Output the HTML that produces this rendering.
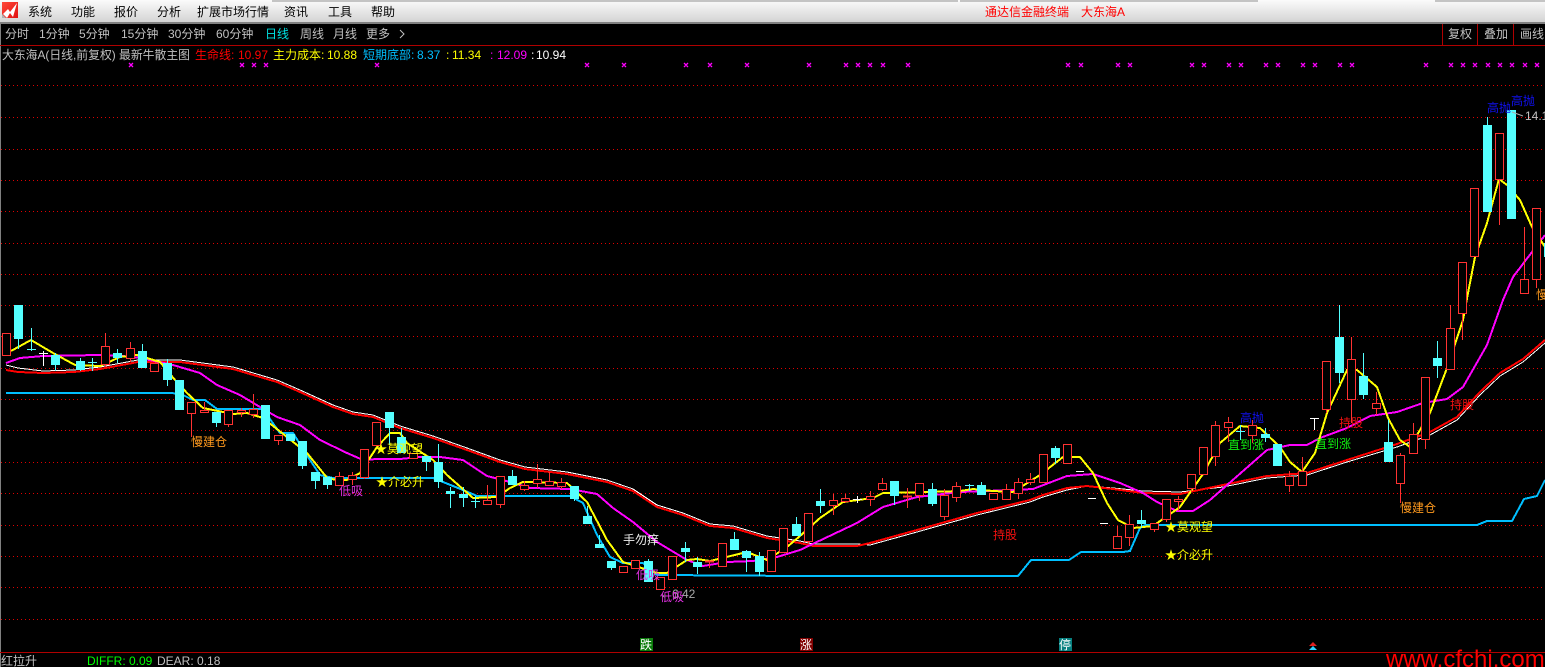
<!DOCTYPE html>
<html><head><meta charset="utf-8"><style>
html,body{margin:0;padding:0;background:#000;overflow:hidden;width:1545px;height:667px}
svg{display:block}
text{font:12px "Liberation Sans","WenQuanYi Zen Hei","Noto Sans CJK SC",sans-serif;white-space:pre}
.g{fill:#c0c0c0}
.l{fill:none;stroke-width:2;shape-rendering:crispEdges}
</style></head><body>
<svg width="1545" height="667" viewBox="0 0 1545 667" xmlns="http://www.w3.org/2000/svg">
<defs><linearGradient id="b" x1="0" y1="0" x2="0" y2="1"><stop offset="0" stop-color="#fbfbfb"/><stop offset="1" stop-color="#d2d2d2"/></linearGradient>
<linearGradient id="r" x1="0" y1="0" x2="1" y2="1"><stop offset="0" stop-color="#ff4a3a"/><stop offset="1" stop-color="#e01010"/></linearGradient></defs>
<rect width="1545" height="667" fill="#000"/>
<rect width="1545" height="23" fill="url(#b)"/>
<rect y="22" width="1545" height="2" fill="#808080"/>
<path d="M272 0h686v2H272zM960 0h298v2H960zM1435 0h110v2h-110z" fill="#c4c4c4"/>
<rect x="2" y="2" width="16" height="16" fill="url(#r)"/>
<path d="M2 18v-4l4 4z" fill="#b0b0b0"/>
<path d="M3 14l5-5 2 3 7-9-4 14-3-4-3 5z" fill="#fff"/>
<g fill="#000"><text x="28" y="16">系统</text><text x="71" y="16">功能</text><text x="114" y="16">报价</text><text x="157" y="16">分析</text><text x="197" y="16">扩展市场行情</text><text x="284" y="16">资讯</text><text x="328" y="16">工具</text><text x="371" y="16">帮助</text></g>
<g fill="#f00"><text x="985" y="16">通达信金融终端</text><text x="1081" y="16">大东海A</text></g>

<rect x="0" y="24" width="1" height="643" fill="#808080"/>
<g class="g"><text x="5" y="38">分时</text><text x="39" y="38">1分钟</text><text x="79" y="38">5分钟</text><text x="121" y="38">15分钟</text><text x="168" y="38">30分钟</text><text x="216" y="38">60分钟</text><text x="300" y="38">周线</text><text x="333" y="38">月线</text><text x="366" y="38">更多</text><text x="1448" y="38">复权</text><text x="1484" y="38">叠加</text><text x="1520" y="38">画线</text></g>
<text x="265" y="38" fill="#00e0e0">日线</text>
<path d="M400 30l4 4-4 4" fill="none" stroke="#c0c0c0"/>
<path d="M0 45.5H1545M1442.5 24V45M1477.5 24V45M1513.5 24V45" stroke="#b00000" fill="none" shape-rendering="crispEdges"/>
<path d="M0 652.5H1545" stroke="#b00000" shape-rendering="crispEdges"/>

<text x="2" y="59" class="g" textLength="188" lengthAdjust="spacingAndGlyphs">大东海A(日线,前复权) 最新牛散主图</text>
<text x="195" y="59" fill="#f00">生命线:</text><text x="238" y="59" fill="#f00">10.97</text>
<text x="273" y="59" fill="#ff0">主力成本:</text><text x="327" y="59" fill="#ff0">10.88</text>
<text x="363" y="59" fill="#00bfff">短期底部:</text><text x="417" y="59" fill="#00bfff">8.37</text>
<text x="446" y="59" fill="#ff0">:</text><text x="452" y="59" fill="#ff0">11.34</text>
<text x="490" y="59" fill="#f0f">:</text><text x="497" y="59" fill="#f0f">12.09</text>
<text x="531" y="59" fill="#fff">:</text><text x="536" y="59" fill="#fff">10.94</text>

<path fill="none" stroke="#f0f" stroke-width="1.3" d="M129 63l4 4m0-4l-4 4M240 63l4 4m0-4l-4 4M252 63l4 4m0-4l-4 4M264 63l4 4m0-4l-4 4M375 63l4 4m0-4l-4 4M585 63l4 4m0-4l-4 4M622 63l4 4m0-4l-4 4M684 63l4 4m0-4l-4 4M708 63l4 4m0-4l-4 4M745 63l4 4m0-4l-4 4M807 63l4 4m0-4l-4 4M844 63l4 4m0-4l-4 4M856 63l4 4m0-4l-4 4M868 63l4 4m0-4l-4 4M881 63l4 4m0-4l-4 4M906 63l4 4m0-4l-4 4M1066 63l4 4m0-4l-4 4M1079 63l4 4m0-4l-4 4M1116 63l4 4m0-4l-4 4M1128 63l4 4m0-4l-4 4M1190 63l4 4m0-4l-4 4M1202 63l4 4m0-4l-4 4M1227 63l4 4m0-4l-4 4M1239 63l4 4m0-4l-4 4M1264 63l4 4m0-4l-4 4M1276 63l4 4m0-4l-4 4M1301 63l4 4m0-4l-4 4M1313 63l4 4m0-4l-4 4M1338 63l4 4m0-4l-4 4M1350 63l4 4m0-4l-4 4M1424 63l4 4m0-4l-4 4M1449 63l4 4m0-4l-4 4M1461 63l4 4m0-4l-4 4M1473 63l4 4m0-4l-4 4M1486 63l4 4m0-4l-4 4M1498 63l4 4m0-4l-4 4M1510 63l4 4m0-4l-4 4M1523 63l4 4m0-4l-4 4M1535 63l4 4m0-4l-4 4"/>

<path stroke="#e00000" stroke-dasharray="1 3" fill="none" shape-rendering="crispEdges" d="M1 85.5H1545M1 117.5H1545M1 149.5H1545M1 180.5H1545M1 211.5H1545M1 243.5H1545M1 274.5H1545M1 305.5H1545M1 336.5H1545M1 368.5H1545M1 399.5H1545M1 430.5H1545M1 462.5H1545M1 493.5H1545M1 525.5H1545M1 556.5H1545M1 587.5H1545M1 619.5H1545"/>

<polyline class="l" stroke="#00bfff" points="6,393 172,393 183,395 193,400 205,400 217,409 263,409 272,422 280,433 293,433 308,457 320,475 333,478 433,478 443,482 463,490 477,496 570,496 583,503 597,535 610,557 623,563 643,563 657,575 800,576 1018,576 1031,560 1069,560 1081,552 1123,552 1130,551 1140,528 1145,525 1477,525 1487,521 1512,521 1524,499 1537,496 1545,480"/>
<polyline class="l" stroke="#fff" style="stroke-width:1" points="6,365 18,368 43,371 74,370 100,367 138,360 180,360 233,367 277,380 300,390 333,405 353,412 373,415 400,426 433,436 467,448 500,460 525,467 567,472 607,480 633,489 657,505 683,513 710,524 733,526 767,536 800,541 813,544 857,544 870,545 917,532 977,515 1030,502 1043,497 1067,490 1087,486 1113,488 1143,491 1180,492 1223,487 1267,478 1307,475 1347,462 1397,447 1430,435 1457,420 1480,395 1500,376 1523,362 1545,343"/>
<polyline class="l" stroke="#f00" points="6,370 18,372 43,373 74,372 100,369 138,362 180,362 233,369 277,382 300,392 333,407 353,414 373,417 400,428 433,438 467,450 500,462 525,469 567,474 607,482 633,491 657,507 683,515 710,526 733,528 767,538 800,543 813,546 857,546 870,543 917,530 977,513 1030,500 1043,495 1067,488 1087,486 1113,489 1143,493 1180,494 1223,485 1267,476 1307,473 1347,460 1397,444 1430,432 1457,417 1480,392 1500,373 1523,359 1545,340"/>
<polyline class="l" stroke="#f0f" points="6,363 20,358 43,356 100,355 123,356 140,358 173,365 200,373 217,385 240,395 260,407 277,417 300,425 320,440 347,453 363,460 377,459 400,459 420,457 440,457 463,460 487,476 510,482 530,488 570,489 597,494 613,508 633,522 657,542 687,560 703,566 727,562 753,561 777,557 800,550 857,523 883,507 917,497 960,492 1013,490 1033,489 1067,476 1093,474 1120,483 1143,493 1157,502 1177,511 1193,511 1210,500 1267,450 1290,445 1307,445 1320,438 1347,428 1370,416 1397,412 1423,403 1447,399 1463,387 1487,345 1503,300 1513,277 1532,252 1545,235"/>
<polyline class="l" stroke="#ff0" points="11,351 31,340 53,353 75,365 100,366 120,357 137,355 160,362 175,380 187,393 203,408 233,414 247,413 263,418 287,437 307,453 328,479 347,480 360,473 377,447 390,433 400,433 407,443 433,460 447,475 473,498 497,497 510,488 523,482 567,483 587,502 607,540 623,562 657,573 667,573 687,560 697,559 710,561 747,552 767,560 787,547 800,536 820,518 843,502 873,498 883,493 927,492 960,491 973,489 993,491 1013,492 1040,475 1063,457 1080,457 1093,473 1107,503 1118,520 1133,528 1153,526 1173,512 1180,507 1203,474 1220,443 1240,426 1260,428 1280,447 1290,462 1302,472 1315,453 1327,413 1347,370 1357,370 1377,387 1388,418 1400,440 1410,447 1430,413 1447,368 1463,320 1468,293 1475,257 1487,223 1499,179 1507,185 1520,200 1532,227 1545,247"/>

<!-- white ticks -->
<path stroke="#fff" fill="none" shape-rendering="crispEdges" d="M43.5 351V366M39 353.5h9M857.5 496V503M853 499.5h9M1076 471.5h8M1088 498.5h8M1100 523.5h8M1310 418.5h9M1314.5 418V430"/>

<!-- cyan wicks -->
<path stroke="#54ffff" fill="none" shape-rendering="crispEdges" d="M18.5 339V349M31.5 328V351M27 349.5h9M92.5 358V371M88 362.5h9M55.5 353V371M80.5 358V371M117.5 349V363M142.5 344V351M167.5 359V386M216.5 423V427M302.5 466V469M315.5 481V489M327.5 485V489M389.5 428V445M401.5 428V437M426.5 462V471M438.5 444V488M450.5 487V508M463.5 487V507M475.5 496V508M471 501.5h9M512.5 470V476M574.5 499V501M587.5 506V516M599.5 535V544M611.5 568V570M648.5 559V561M685.5 542V562M697.5 557V574M734.5 532V539M746.5 550V572M759.5 552V576M796.5 517V524M820.5 489V513M894.5 496V505M932.5 483V506M969.5 484V491M965 485.5h9M981.5 482V485M1055.5 446V464M1141.5 510V528M1240.5 425V440M1236 431.5h9M1265.5 428V442M1339.5 305V383M1363.5 353V399M1388.5 420V442M1437.5 341V378M1487.5 117V125"/>
<!-- cyan bodies -->
<path fill="#54ffff" shape-rendering="crispEdges" d="M14 305h9v34h-9zM51 355h9v10h-9zM76 361h9v9h-9zM113 353h9v5h-9zM138 351h9v17h-9zM163 363h9v17h-9zM175 380h9v30h-9zM212 412h9v11h-9zM261 405h9v34h-9zM286 434h9v7h-9zM298 441h9v25h-9zM311 472h9v9h-9zM323 477h9v8h-9zM385 412h9v16h-9zM397 437h9v16h-9zM422 456h9v6h-9zM434 462h9v20h-9zM446 491h9v3h-9zM459 494h9v4h-9zM508 476h9v9h-9zM570 486h9v13h-9zM583 516h9v8h-9zM595 544h9v4h-9zM607 561h9v7h-9zM644 561h9v21h-9zM681 548h9v4h-9zM693 562h9v5h-9zM730 539h9v11h-9zM742 551h9v7h-9zM755 556h9v16h-9zM792 524h9v12h-9zM816 501h9v5h-9zM890 481h9v15h-9zM928 489h9v15h-9zM977 485h9v10h-9zM1051 448h9v10h-9zM1137 520h9v4h-9zM1261 434h9v4h-9zM1273 444h9v22h-9zM1335 337h9v36h-9zM1359 376h9v19h-9zM1384 442h9v20h-9zM1433 358h9v8h-9zM1483 125h9v87h-9zM1507 110h9v109h-9zM1544 243h1v14h-1z"/>

<!-- red wicks -->
<path stroke="#ff3232" fill="none" shape-rendering="crispEdges" d="M105.5 333V367M130.5 342V362M191.5 413V437M204.5 402V412M228.5 424V427M241.5 408V417M253.5 394V418M278.5 440V445M339.5 472V476M352.5 472V485M364.5 477V479M413.5 458V459M487.5 485V500M500.5 504V508M524.5 481V491M537.5 464V488M549.5 472V481M561.5 478V489M709.5 560V568M808.5 541V544M833.5 494V515M845.5 494V503M870.5 491V506M882.5 478V491M907.5 488V508M919.5 495V501M944.5 489V520M956.5 482V502M1006.5 484V489M1018.5 478V499M1030.5 473V485M1117.5 526V536M1129.5 515V546M1154.5 529V532M1166.5 519V522M1178.5 496V511M1191.5 488V492M1215.5 421V466M1228.5 417V442M1252.5 420V443M1289.5 471V492M1302.5 457V471M1326.5 409V413M1351.5 337V423M1376.5 392V415M1400.5 453V503M1413.5 423V434M1425.5 439V449M1450.5 305V328M1462.5 313V340M1499.5 179V225M1524.5 227V279M1536.5 279V288"/>
<!-- red bodies -->
<path fill="#000" stroke="#ff3232" shape-rendering="crispEdges" d="M2.5 333.5h8v22h-8zM101.5 346.5h8v18h-8zM126.5 348.5h8v10h-8zM150.5 363.5h8v8h-8zM187.5 402.5h8v11h-8zM200.5 410.5h8v2h-8zM224.5 410.5h8v14h-8zM237.5 410.5h8v2h-8zM249.5 409.5h8v5h-8zM274.5 435.5h8v5h-8zM335.5 476.5h8v9h-8zM348.5 475.5h8v4h-8zM360.5 449.5h8v28h-8zM372.5 422.5h8v23h-8zM409.5 453.5h8v5h-8zM483.5 500.5h8v4h-8zM496.5 476.5h8v28h-8zM520.5 485.5h8v4h-8zM533.5 479.5h8v4h-8zM545.5 481.5h8v4h-8zM557.5 482.5h8v4h-8zM619.5 566.5h8v6h-8zM631.5 560.5h8v8h-8zM656.5 577.5h8v12h-8zM668.5 556.5h8v23h-8zM705.5 561h8v1h-8zM718.5 543.5h8v23h-8zM767.5 550.5h8v21h-8zM779.5 528.5h8v24h-8zM804.5 513.5h8v28h-8zM829.5 500.5h8v5h-8zM841.5 498.5h8v3h-8zM866.5 496.5h8v3h-8zM878.5 483.5h8v6h-8zM903.5 496h8v1h-8zM915.5 483.5h8v12h-8zM940.5 495.5h8v21h-8zM952.5 486.5h8v11h-8zM989.5 493.5h8v6h-8zM1002.5 489.5h8v10h-8zM1014.5 482.5h8v11h-8zM1026.5 479.5h8v3h-8zM1039.5 454.5h8v28h-8zM1063.5 444.5h8v19h-8zM1113.5 536.5h8v12h-8zM1125.5 524.5h8v13h-8zM1150.5 523.5h8v6h-8zM1162.5 499.5h8v20h-8zM1174.5 499.5h8v2h-8zM1187.5 474.5h8v14h-8zM1199.5 447.5h8v27h-8zM1211.5 425.5h8v31h-8zM1224.5 422.5h8v5h-8zM1248.5 425.5h8v10h-8zM1285.5 476.5h8v9h-8zM1298.5 471.5h8v14h-8zM1322.5 361.5h8v48h-8zM1347.5 359.5h8v40h-8zM1372.5 403.5h8v5h-8zM1396.5 455.5h8v28h-8zM1409.5 434.5h8v19h-8zM1421.5 377.5h8v62h-8zM1446.5 328.5h8v41h-8zM1458.5 262.5h8v51h-8zM1470.5 188.5h8v68h-8zM1495.5 133.5h8v46h-8zM1520.5 279.5h8v14h-8zM1532.5 208.5h8v71h-8z"/>

<!-- signal labels -->
<g fill="#ff9a1e"><text x="191" y="446">慢建仓</text><text x="1400" y="512">慢建仓</text><text x="1536" y="299">慢</text></g>
<g fill="#ff0"><text x="375" y="453">★莫观望</text><text x="376" y="486">★介必升</text><text x="1165" y="531">★莫观望</text><text x="1165" y="559">★介必升</text></g>
<text x="660" y="598" fill="#aaa">←6.42</text>
<g fill="#e030e0"><text x="339" y="495">低吸</text><text x="636" y="579">低吸</text><text x="660" y="601">低吸</text></g>
<text x="623" y="544" fill="#f0f0f0">手勿痒</text>
<g fill="#f01010"><text x="993" y="539">持股</text><text x="1339" y="427">持股</text><text x="1450" y="409">持股</text></g>
<g fill="#1010f0"><text x="1240" y="422">高抛</text><text x="1487" y="112">高抛</text><text x="1511" y="105">高抛</text></g>
<g fill="#10f010"><text x="1228" y="449">直到涨</text><text x="1315" y="448">直到涨</text></g>
<path d="M1512 112l11 4" stroke="#aaa" fill="none"/>
<text x="1525" y="120" fill="#c0c0c0">14.1</text>

<!-- bottom chips -->
<rect x="640" y="638" width="13" height="13" fill="#0a7a0a"/><text x="640" y="649" fill="#fff">跌</text>
<rect x="800" y="638" width="13" height="13" fill="#800000"/><text x="800" y="649" fill="#fff">涨</text>
<rect x="1059" y="638" width="13" height="13" fill="#088080"/><text x="1059" y="649" fill="#fff">停</text>
<path d="M1313 642l4 4h-8z" fill="#e02020"/><path d="M1313 646l4 4h-8z" fill="#30d0ff"/>

<text x="1" y="665" class="g">红拉升</text>
<text x="87" y="665" fill="#0f0">DIFFR: 0.09</text>
<text x="157" y="665" fill="#c0c0c0">DEAR: 0.18</text>
<text x="1386" y="667" fill="#f00" style="font:24px 'Liberation Sans',sans-serif">www.cfchi.com</text>
</svg>
</body></html>
